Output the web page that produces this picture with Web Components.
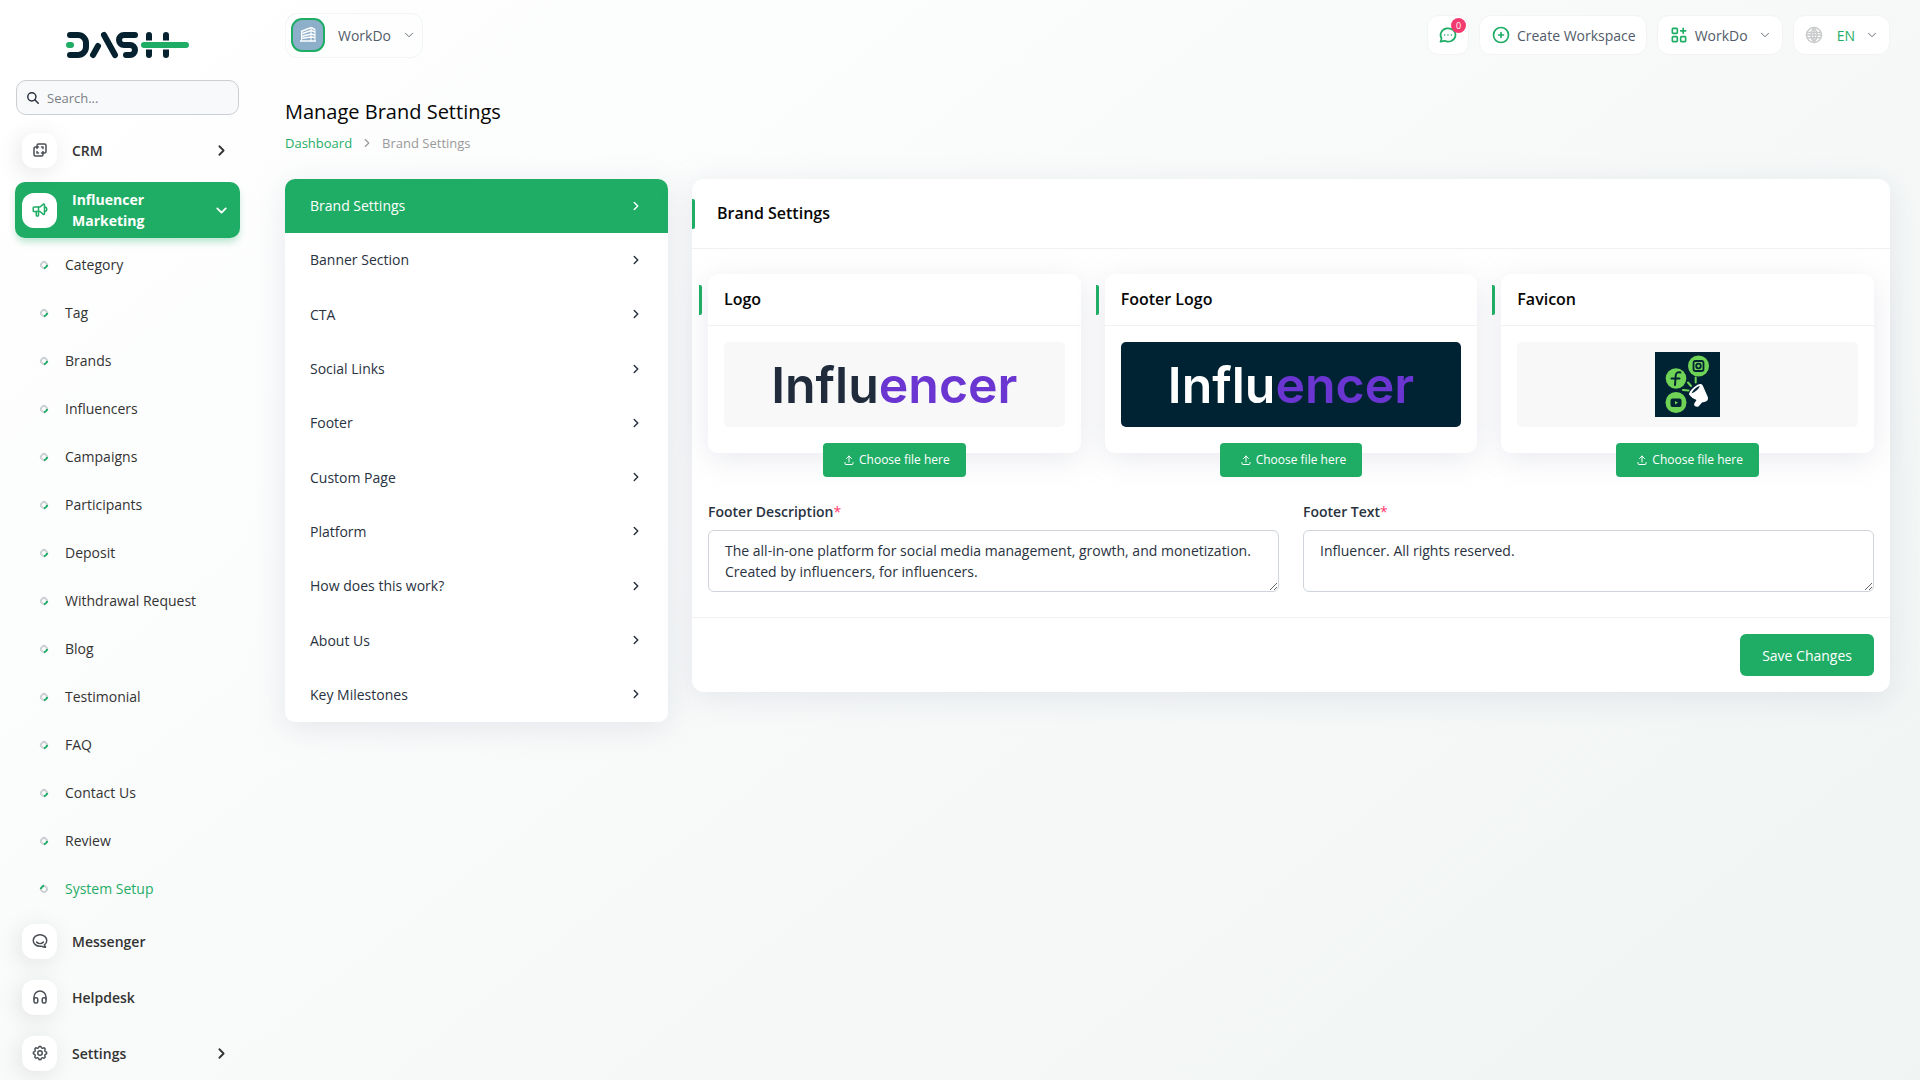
<!DOCTYPE html>
<html lang="en">
<head>
<meta charset="utf-8">
<title>Manage Brand Settings</title>
<style>
  :root {
    --green: #1fad66;
    --ink: #293240;
    --line: #f1f1f1;
    --card-shadow: 0 6px 30px rgba(182, 186, 203, 0.3);
  }
  html { background: #fff; }
  body {
    margin: 0;
    min-height: 100vh;
    font: 400 14px/21px "Open Sans", sans-serif;
    color: var(--ink);
    background: linear-gradient(141.55deg, rgba(240, 244, 243, 0) 3%, #f0f4f3 100%) fixed;
  }
</style>
</head>
<body>
<app-shell>
  <side-bar slot="side">
    <menu-item icon="layers" more="right">CRM</menu-item>
    <menu-item icon="speaker" more="down" active>Influencer Marketing</menu-item>
    <sub-item>Category</sub-item>
    <sub-item>Tag</sub-item>
    <sub-item>Brands</sub-item>
    <sub-item>Influencers</sub-item>
    <sub-item>Campaigns</sub-item>
    <sub-item>Participants</sub-item>
    <sub-item>Deposit</sub-item>
    <sub-item>Withdrawal Request</sub-item>
    <sub-item>Blog</sub-item>
    <sub-item>Testimonial</sub-item>
    <sub-item>FAQ</sub-item>
    <sub-item>Contact Us</sub-item>
    <sub-item>Review</sub-item>
    <sub-item active>System Setup</sub-item>
    <menu-item icon="chat">Messenger</menu-item>
    <menu-item icon="headphones">Helpdesk</menu-item>
    <menu-item icon="gear" more="right">Settings</menu-item>
  </side-bar>
  <top-bar slot="top"></top-bar>
  <page-heading slot="heading"></page-heading>
  <settings-nav slot="nav"></settings-nav>
  <brand-form slot="content">
    <upload-card heading="Logo" name="logo"><influencer-logo></influencer-logo></upload-card>
    <upload-card heading="Footer Logo" name="footer-logo" dark><influencer-logo></influencer-logo></upload-card>
    <upload-card heading="Favicon" name="favicon"><favicon-art></favicon-art></upload-card>
    <text-field slot="fields" label="Footer Description">The all-in-one platform for social media management, growth, and monetization. Created by influencers, for influencers.</text-field>
    <text-field slot="fields" label="Footer Text">Influencer. All rights reserved.</text-field>
  </brand-form>
</app-shell>

<script>
const ICONS = {
  right: '<path d="M9 6l6 6l-6 6"/>',
  down: '<path d="M6 9l6 6l6 -6"/>',
  search: '<circle cx="10" cy="10" r="7"/><path d="M21 21l-6 -6"/>',
  layers: '<path d="M16 16v2a2 2 0 0 1 -2 2h-8a2 2 0 0 1 -2 -2v-8a2 2 0 0 1 2 -2h2v-2a2 2 0 0 1 2 -2h8a2 2 0 0 1 2 2v8a2 2 0 0 1 -2 2h-2"/><path d="M10 8h-2v2M8 14v2h2M14 8h2v2M16 14v2h-2"/>',
  speaker: '<path d="M18 8a3 3 0 0 1 0 6"/><path d="M10 8v11a1 1 0 0 1 -1 1h-1a1 1 0 0 1 -1 -1v-5"/><path d="M12 8h0l4.524 -3.77a.9 .9 0 0 1 1.476 .692v12.156a.9 .9 0 0 1 -1.476 .692l-4.524 -3.77h-8a1 1 0 0 1 -1 -1v-4a1 1 0 0 1 1 -1h8"/>',
  chat: '<path d="M17.802 17.292s.077 -.055 .2 -.149c1.843 -1.425 3 -3.49 3 -5.789c0 -4.286 -4.03 -7.764 -9 -7.764c-4.97 0 -9 3.478 -9 7.764c0 4.288 4.03 7.646 9 7.646c.424 0 1.12 -.028 2.088 -.084c1.262 .82 3.104 1.493 4.716 1.493c.499 0 .734 -.41 .414 -.828c-.486 -.596 -1.156 -1.551 -1.416 -2.29z"/><path d="M7.5 13.5c2.5 2.5 6.5 2.5 9 0"/>',
  headphones: '<rect x="4" y="13" width="5" height="7" rx="2"/><rect x="15" y="13" width="5" height="7" rx="2"/><path d="M4 15v-3a8 8 0 0 1 16 0v3"/>',
  gear: '<path d="M10.325 4.317c.426 -1.756 2.924 -1.756 3.35 0a1.724 1.724 0 0 0 2.573 1.066c1.543 -.94 3.31 .826 2.37 2.37a1.724 1.724 0 0 0 1.065 2.572c1.756 .426 1.756 2.924 0 3.35a1.724 1.724 0 0 0 -1.066 2.573c.94 1.543 -.826 3.31 -2.37 2.37a1.724 1.724 0 0 0 -2.572 1.065c-.426 1.756 -2.924 1.756 -3.35 0a1.724 1.724 0 0 0 -2.573 -1.066c-1.543 .94 -3.31 -.826 -2.37 -2.37a1.724 1.724 0 0 0 -1.065 -2.572c-1.756 -.426 -1.756 -2.924 0 -3.35a1.724 1.724 0 0 0 1.066 -2.573c-.94 -1.543 .826 -3.31 2.37 -2.37c1 .608 2.296 .07 2.572 -1.065z"/><circle cx="12" cy="12" r="3"/>',
  message: '<path d="M3 20l1.3 -3.9a9 8 0 1 1 3.4 2.9l-4.7 1"/><path d="M12 12v.01M8 12v.01M16 12v.01"/>',
  plus: '<circle cx="12" cy="12" r="9"/><path d="M9 12h6M12 9v6"/>',
  apps: '<rect x="4" y="4" width="6" height="6" rx="1"/><rect x="4" y="14" width="6" height="6" rx="1"/><rect x="14" y="14" width="6" height="6" rx="1"/><path d="M14 7h6M17 4v6"/>',
  globe: '<circle cx="12" cy="12" r="10"/><path d="M3.6 8.500h16.8M3.6 15.500h16.8M2 12h20M12 2v20"/><path d="M11.5 3a13 13 0 0 0 0 18M12.500 3a13 13 0 0 1 0 18"/>',
  upload: '<path d="M4 17v2a2 2 0 0 0 2 2h12a2 2 0 0 0 2 -2v-2M7 9l5 -5l5 5M12 4v12"/>'
};

class Base extends HTMLElement {
  constructor() { super(); this.attachShadow({ mode: 'open' }); }
  connectedCallback() {
    this.shadowRoot.innerHTML = `<style>*{box-sizing:border-box}:host{display:block}${this.css()}</style>${this.html()}`;
  }
  css() { return ''; }
  html() { return '<slot></slot>'; }
}

customElements.define('ui-icon', class extends Base {
  css() { return `:host{display:inline-flex;flex:none}svg{display:block;fill:none;stroke:currentColor;stroke-linecap:round;stroke-linejoin:round}`; }
  html() {
    const s = this.getAttribute('size') || 18, w = this.getAttribute('weight') || 2;
    return `<svg width="${s}" height="${s}" viewBox="0 0 24 24" stroke-width="${w}" aria-hidden="true">${ICONS[this.getAttribute('name')]}</svg>`;
  }
});

customElements.define('app-shell', class extends Base {
  css() { return `
    :host{display:flex;align-items:flex-start;min-height:100vh}
    aside{flex:none;width:255px;height:100vh;overflow:hidden;position:sticky;top:0}
    .page{flex:1;min-width:0;padding:0 30px 30px}
    .cols{display:grid;grid-template-columns:383px minmax(0,1fr);gap:24px;align-items:start}`; }
  html() { return `<aside><slot name="side"></slot></aside>
    <div class="page"><slot name="top"></slot>
    <main><slot name="heading"></slot><div class="cols"><slot name="nav"></slot><slot name="content"></slot></div></main></div>`; }
});

customElements.define('dash-logo', class extends Base {
  css() { return `svg{display:block;fill:none;stroke:#06212f;stroke-width:6;stroke-linecap:round;stroke-linejoin:round}.g{stroke:var(--green)}`; }
  html() { return `<svg width="125" height="28" viewBox="0 0 125 28" role="img" aria-label="Dash">
    <path d="M5 4h8a8 8 0 0 1 8 8v4a8 8 0 0 1 -8 8h-8"/>
    <path d="M39 4l11 20M33 15l-5 9"/>
    <path d="M70 4h-11a5 5 0 0 0 0 10h6a5 5 0 0 1 0 10h-4"/>
    <path d="M84 4v20M101 4v20"/>
    <path d="M79 14h41" stroke="#fdfefe" stroke-width="9" stroke-linecap="butt"/>
    <path class="g" d="M4 14h2M79 14h42"/></svg>`; }
});

customElements.define('side-bar', class extends Base {
  css() { return `
    :host{padding:0 15px}
    dash-logo{display:flex;justify-content:center;padding:31px 0 21px}
    .search{display:flex;align-items:center;gap:7px;height:35px;margin:0 1px 7px;padding:0 9px;border:1px solid #cbcfd1;border-radius:10px;background:#f8f9fa;color:#293240}
    input{flex:1;min-width:0;border:0;outline:0;background:none;padding:0;font:400 13px/20px "Open Sans",sans-serif;color:inherit}
    input::placeholder{color:#7b8086;opacity:1}`; }
  html() { return `<a href="#" aria-label="Dash home"><dash-logo></dash-logo></a>
    <label class="search"><ui-icon name="search" size="14" weight="2.500"></ui-icon><input type="search" placeholder="Search..." aria-label="Search"></label>
    <nav><slot></slot></nav>`; }
});

customElements.define('menu-item', class extends Base {
  css() { return `
    a{display:flex;align-items:center;min-height:56px;padding:7px 10px 7px 7px;border-radius:10px;color:#333;font-weight:600;text-decoration:none}
    .box{flex:none;display:flex;align-items:center;justify-content:center;width:35px;height:35px;margin-right:15px;border-radius:12px;background:#fff;color:#4b5057;box-shadow:-3px 4px 23px rgba(0,0,0,.1)}
    .text{flex:1;padding-right:50px}
    :host([active]){margin:4px 0 3px}
    :host([active]) a{background:var(--green);color:#fff;font-weight:700;box-shadow:0 5px 7px -1px rgba(31,173,102,.3)}
    :host([active]) .box{color:var(--green);box-shadow:none}`; }
  html() {
    const more = this.getAttribute('more');
    return `<a href="#"><span class="box"><ui-icon name="${this.getAttribute('icon')}" size="18"></ui-icon></span>
      <span class="text"><slot></slot></span>${more ? `<ui-icon name="${more}" size="17" weight="2.500"></ui-icon>` : ''}</a>`;
  }
});

customElements.define('sub-item', class extends Base {
  css() { return `
    a{display:flex;align-items:center;gap:17px;height:48px;padding:0 0 1px 25px;color:#333;font-weight:500;text-decoration:none}
    i{width:8px;height:8px;border:2px solid #ccd0d2;border-right-color:var(--green);border-radius:50%;transform:rotate(45deg)}
    :host([active]) a{color:var(--green)}
    :host([active]) i{transform:rotate(225deg)}`; }
  html() { return `<a href="#"><i></i><slot></slot></a>`; }
});

customElements.define('top-bar', class extends Base {
  css() { return `
    header{display:flex;align-items:center;justify-content:space-between;height:70px}
    .group{display:flex;gap:10px}
    button{display:flex;align-items:center;height:40px;padding:0 10px;border:1px solid #f3f4f4;border-radius:12px;background:#fff;color:#525b69;font:400 14px/21px "Open Sans",sans-serif;position:relative}
    button.space{height:45px;padding:0 6px 0 5px;background:none}
    .space span{margin:0 11px 0 13px}
    .avatar{width:34px;height:34px;border:2px solid var(--green);border-radius:11px;background:#8dafca}
    .green{color:var(--green)}
    .badge{position:absolute;top:2px;right:2px;width:15px;height:15px;border-radius:50%;background:#f33b70;color:#fff;font-size:9px;line-height:15px;text-align:center}
    .label{margin:0 0 0 6px}
    .more{margin:0 0 0 10px}
    .lang{margin:0 0 0 14px}
    .globe{color:#c9cbcc}
    .wide{padding:0 10px 0 11px}`; }
  html() { return `<header>
    <button class="space" aria-haspopup="menu"><svg class="avatar" viewBox="0 0 30 30" fill="none" stroke="#fff" stroke-width="1.500" aria-hidden="true">
      <path d="M8 11.500L18 7.500L22 9.500M8 14L18 10.500L22 12M8 16.500L18 14L22 15M8 18.500L18 17L22 17.500M7 21h16"/><path d="M18 7v14M8.500 11.500v9M22 9.500v11" stroke-width="1"/></svg>
      <span>WorkDo</span><ui-icon name="down" size="14" weight="1.500"></ui-icon></button>
    <div class="group">
      <button aria-label="Messages"><ui-icon class="green" name="message" size="20"></ui-icon><span class="badge">0</span></button>
      <button class="wide"><ui-icon class="green" name="plus" size="20"></ui-icon><span class="label">Create Workspace</span></button>
      <button aria-haspopup="menu" class="wide"><ui-icon class="green" name="apps" size="20"></ui-icon><span class="label">WorkDo</span><ui-icon class="more" name="down" size="14" weight="1.500"></ui-icon></button>
      <button aria-haspopup="menu" class="wide"><ui-icon class="globe" name="globe" size="18"></ui-icon><span class="lang green">EN</span><ui-icon class="more" name="down" size="14" weight="1.500"></ui-icon></button>
    </div></header>`; }
});

customElements.define('page-heading', class extends Base {
  css() { return `
    :host{padding:28px 0 26px}
    h1{margin:0 0 7px;font-size:20px;line-height:28px;font-weight:500;color:#060606}
    ol{display:flex;align-items:center;gap:8px;margin:0;padding:0;list-style:none;font-size:13px;line-height:20px;color:#999}
    li{display:flex;align-items:center;gap:8px}
    a{color:var(--green);text-decoration:none}`; }
  html() { return `<h1>Manage Brand Settings</h1><nav aria-label="Breadcrumb"><ol><li><a href="#">Dashboard</a></li>
    <li><ui-icon name="right" size="14"></ui-icon>Brand Settings</li></ol></nav>`; }
});

customElements.define('settings-nav', class extends Base {
  css() { return `
    nav{display:grid;grid-auto-rows:1fr;min-height:543px;border-radius:10px;background:#fff;overflow:hidden}
    :host{border-radius:10px;box-shadow:var(--card-shadow)}
    a{display:flex;align-items:center;justify-content:space-between;padding:15px 25px 16px;color:var(--ink);text-decoration:none}
    a[aria-current]{background:var(--green);color:#fff}`; }
  html() {
    return `<nav>${['Brand Settings', 'Banner Section', 'CTA', 'Social Links', 'Footer', 'Custom Page', 'Platform', 'How does this work?', 'About Us', 'Key Milestones']
      .map((t, i) => `<a href="#"${i ? '' : ' aria-current="page"'}>${t}<ui-icon name="right" size="14" weight="2.500"></ui-icon></a>`).join('')}</nav>`;
  }
});

customElements.define('brand-form', class extends Base {
  css() { return `
    form{border-radius:12px;background:#fff;box-shadow:var(--card-shadow)}
    header{position:relative;padding:25px;border-bottom:1px solid var(--line)}
    header::before{content:"";position:absolute;left:0;top:20px;width:3px;height:30px;border-radius:0 2px 2px 0;background:var(--green)}
    h2{margin:0;font-size:16px;line-height:19px;font-weight:600;color:#060606}
    .body{padding:25px 16px}
    .row{display:grid;grid-template-columns:repeat(3,minmax(0,1fr));gap:24px}
    .fields{grid-template-columns:repeat(2,minmax(0,1fr));margin-top:48px}
    footer{display:flex;justify-content:flex-end;padding:16px;border-top:1px solid var(--line)}
    button{height:42px;padding:0 22px;border:0;border-radius:6px;background:var(--green);color:#fff;font:500 14px/21px "Open Sans",sans-serif}`; }
  html() { return `<form><header><h2>Brand Settings</h2></header>
    <div class="body"><div class="row"><slot></slot></div><div class="row fields"><slot name="fields"></slot></div></div>
    <footer><button type="button">Save Changes</button></footer></form>`; }
});

customElements.define('upload-card', class extends Base {
  css() { return `
    section{border-radius:10px;background:#fff;box-shadow:var(--card-shadow)}
    header{position:relative;padding:16px;border-bottom:1px solid var(--line)}
    header::before{content:"";position:absolute;left:-9px;top:11px;width:3px;height:30px;border-radius:0 2px 2px 0;background:var(--green)}
    h3{margin:0;font-size:16px;line-height:19px;font-weight:600;color:#060606}
    .well{display:flex;align-items:center;justify-content:center;height:85px;margin:16px;border-radius:5px;background:#f8f8f9;color:#202b3c;overflow:hidden}
    :host([dark]) .well{background:#002333;color:#fff}
    .pick{display:flex;justify-content:center;height:10px}
    label{position:relative;display:flex;align-items:center;gap:4px;height:34px;padding:0 16px 0 20px;border-radius:4px;background:var(--green);color:#fff;font-size:12px;line-height:18px;font-weight:500;cursor:pointer}
    input{position:absolute;inset:0;opacity:0;width:100%;height:100%}`; }
  html() {
    const id = this.getAttribute('name');
    return `<section><header><h3>${this.getAttribute('heading')}</h3></header><div class="well"><slot></slot></div>
      <div class="pick"><label for="${id}"><ui-icon name="upload" size="12"></ui-icon>Choose file here<input type="file" id="${id}"></label></div></section>`;
  }
});

customElements.define('influencer-logo', class extends Base {
  css() { return `:host{font:600 50px/60px Inter,sans-serif}b{font-weight:600;color:#6b35d2}`; }
  html() { return `Influ<b>encer</b>`; }
});

customElements.define('favicon-art', class extends Base {
  css() { return `svg{display:block}`; }
  html() { return `<svg width="65" height="65" viewBox="0 0 65 65" role="img" aria-label="Favicon preview">
    <rect width="65" height="65" fill="#002333"/>
    <g fill="#6fd455"><circle cx="43.500" cy="14" r="10.500"/><circle cx="21" cy="26.500" r="10.300"/><circle cx="21" cy="50.500" r="10.500"/></g>
    <g fill="none" stroke="#002333" stroke-width="1.800"><rect x="38.500" y="9" width="10" height="10" rx="2"/><circle cx="43.500" cy="14" r="2.300"/>
    <path d="M25.500 20.500c-3-.8-4.500.5-4.800 3l-.7 9.500M16.500 26.500h8" stroke-width="2" stroke-linecap="round"/></g>
    <rect x="15.500" y="46.500" width="11" height="8.500" rx="2" fill="#002333"/><path d="M20 49l3 1.700l-3 1.700z" fill="#6fd455"/>
    <path d="M40.700 25.500v5M33 30.500l3 3.500M28 38l5.500.5" stroke="#6fd455" stroke-width="2" stroke-linecap="round"/>
    <path d="M34.500 43Q33.500 42 35 39.500Q40 33 45 32Q47 31.500 48 34L53 45.500Q53.500 48 51 49.500L47 50.500L43.500 54.500Q39.500 55.500 39 52L41.500 48Q37 46.500 34.500 43z" fill="#fff"/>
    <path d="M36.500 41.500Q39 36 45 33.800Q43 39 36.500 41.500z" fill="#002333"/></svg>`; }
});

customElements.define('text-field', class extends Base {
  css() { return `
    label{display:block;margin-bottom:8px;font-weight:600}
    label span{color:#ff3a6e;font-weight:400}
    textarea{display:block;width:100%;height:62px;padding:9px 16px;border:1px solid #ced4da;border-radius:6px;background:#fff;color:var(--ink);font:400 14px/21px "Open Sans",sans-serif;outline:0;resize:vertical}`; }
  html() { return `<label for="field">${this.getAttribute('label')}<span>*</span></label><textarea id="field">${this.textContent.trim()}</textarea>`; }
});
</script>
</body>
</html>
